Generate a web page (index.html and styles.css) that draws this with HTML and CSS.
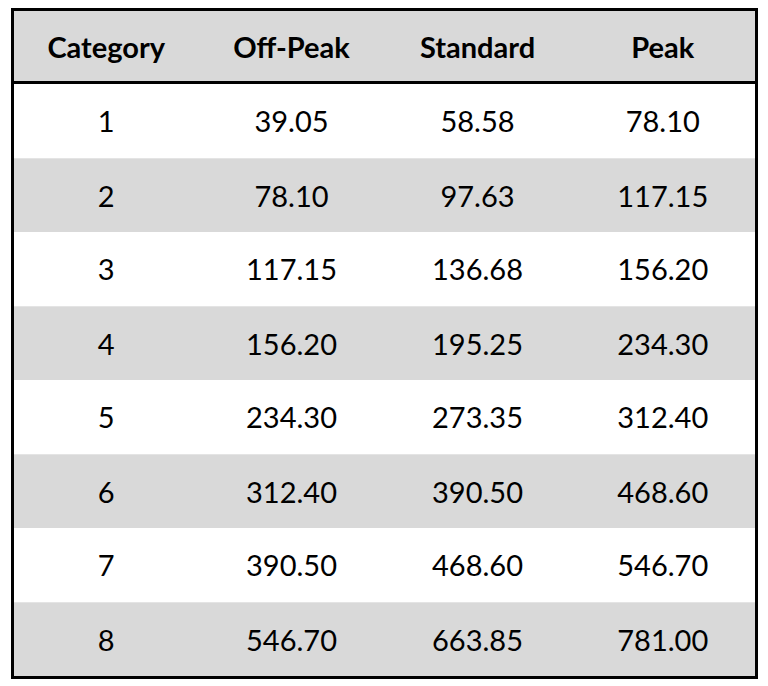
FILE: index.html
```html
<!DOCTYPE html>
<html lang="en">
<head>
<meta charset="utf-8">
<title>Price Categories</title>
<link rel="stylesheet" href="styles.css">
</head>
<body>
<table class="rates">
  <thead>
    <tr class="head"><th>Category</th><th>Off-Peak</th><th>Standard</th><th>Peak</th></tr>
  </thead>
  <tbody>
    <tr><td>1</td><td>39.05</td><td>58.58</td><td>78.10</td></tr>
    <tr class="alt"><td>2</td><td>78.10</td><td>97.63</td><td>117.15</td></tr>
    <tr><td>3</td><td>117.15</td><td>136.68</td><td>156.20</td></tr>
    <tr class="alt"><td>4</td><td>156.20</td><td>195.25</td><td>234.30</td></tr>
    <tr><td>5</td><td>234.30</td><td>273.35</td><td>312.40</td></tr>
    <tr class="alt"><td>6</td><td>312.40</td><td>390.50</td><td>468.60</td></tr>
    <tr><td>7</td><td>390.50</td><td>468.60</td><td>546.70</td></tr>
    <tr class="alt"><td>8</td><td>546.70</td><td>663.85</td><td>781.00</td></tr>
  </tbody>
</table>
</body>
</html>
```
FILE: styles.css
```css
html, body {
  margin: 0;
  padding: 0;
  background: #fff;
}
body {
  padding: 8px 10px 0 11px;
  font-family: Lato, "Open Sans", "Liberation Sans", sans-serif;
  color: #000;
}
.rates {
  width: 747px;
  border-collapse: collapse;
  table-layout: fixed;
  border: 3px solid #000;
}
.rates th,
.rates td {
  padding: 0;
  text-align: center;
  vertical-align: middle;
  font-size: 29px;
}
.rates th {
  height: 70px;
  font-weight: 700;
  background: #d9d9d9;
  border-bottom: 3px solid #000;
}
.rates td {
  height: 73.5px;
  font-weight: 400;
  background: #fff;
}
.rates tr.alt td {
  background: #d9d9d9;
  border-top: 1px solid #e4e4e4;
}
```
